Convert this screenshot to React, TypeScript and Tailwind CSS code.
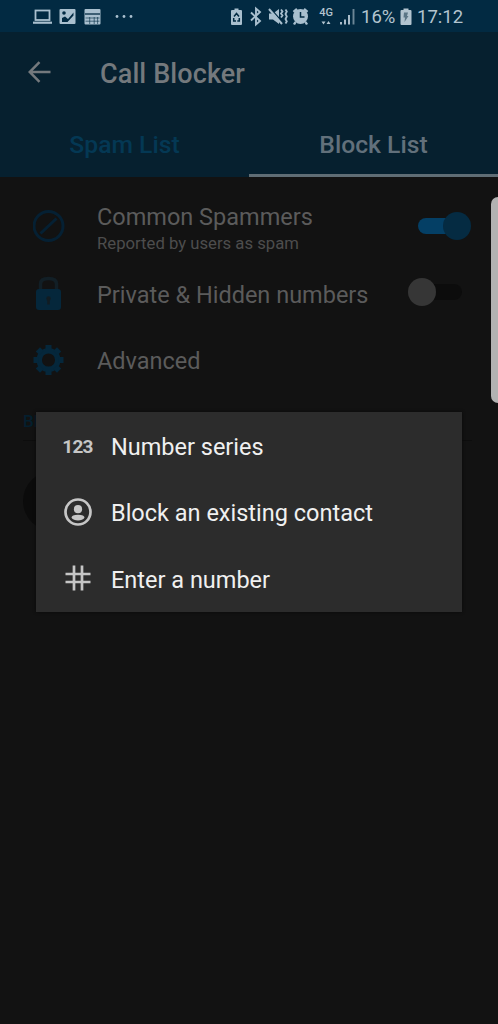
import type { ReactNode } from "react"

function StatusIcons() {
  return (
    <svg className="block w-[110px] h-8 text-[#a9bfce]" viewBox="0 0 110 32" fill="none" stroke="currentColor">
      {/* Laptop */}
      <rect x="4.500" y="10.500" width="14" height="9.500" strokeWidth="1.800" />
      <path d="M2 22.700h19" strokeWidth="2.200" />
      {/* Picture */}
      <rect x="28.500" y="9" width="16" height="15" rx="1" fill="currentColor" stroke="none" />
      <path d="M31 22v-4l3-1.500 3 2.500 5.500-6.500v3l-6 6.500z" fill="#022a42" stroke="none" />
      <circle cx="33" cy="13" r="1.800" fill="#022a42" stroke="none" />
      {/* Calendar */}
      <rect x="53.500" y="9" width="16" height="15.500" rx="1" fill="currentColor" stroke="none" />
      <path d="M54 14h15" stroke="#022a42" strokeWidth="1.300" />
      <path d="M54.500 18h14M54.500 21.200h14" stroke="#022a42" strokeWidth=".6" />
      <path d="M58.700 17v7M63.200 17v7M66.600 17v7" stroke="#022a42" strokeWidth=".6" />
      {/* More */}
      <g fill="currentColor" stroke="none">
        <circle cx="86" cy="16.500" r="1.400" />
        <circle cx="93" cy="16.500" r="1.400" />
        <circle cx="100" cy="16.500" r="1.400" />
      </g>
    </svg>
  )
}

function SystemIcons() {
  return (
    <svg className="block w-[88px] h-8 text-[#a9bfce]" viewBox="0 0 88 32" fill="none" stroke="currentColor">
      {/* Battery saver */}
      <path d="M1 11q0-1 1-1h2.500V8.500h4V10H11q1 0 1 1v13q0 1-1 1H2q-1 0-1-1z" fill="currentColor" stroke="none" />
      <path d="M4 16.500L6.500 13.500l2.500 3M3.700 18v3H6M9.300 18v3H7.300" stroke="#022a42" strokeWidth="1.500" />
      {/* Bluetooth */}
      <path d="M21 12.500l9 8.500-4 3.500v-16l4 3.500-9 8.500" strokeWidth="1.900" />
      {/* Muted speaker */}
      <path d="M39 13.500h4l6-4.500v15l-6-4.500h-4z" fill="currentColor" stroke="none" />
      <path d="M40.500 8.500l13 15" stroke="#022a42" strokeWidth="1.500" />
      <path d="M39 9l13 15" strokeWidth="2" />
      <path d="M51 9.500l1.500 2-1.500 2 1.500 2-1.500 2M55.500 9.500l1.300 2-1.300 2.500 1.300 2.500-1.300 2.500 1.300 2.500-1.300 2" strokeWidth="1.800" />
      {/* Alarm */}
      <circle cx="70.500" cy="16.500" r="7.500" fill="currentColor" stroke="none" />
      <path d="M63.500 12l3.500-3M77.500 12l-3.500-3M65.500 22l-1.500 2.500M75.500 22l1.500 2.500" strokeWidth="2.400" />
      <path d="M70.500 12v5h4" stroke="#022a42" strokeWidth="1.500" />
    </svg>
  )
}

function Header() {
  return (
    <header className="h-[177px] bg-[#06202f]">
      <div className="flex h-8 bg-[#022a42] pl-[31px] text-[#b3c4cf]">
        <StatusIcons />
        <div className="ml-[89px] flex">
          <SystemIcons />
          <div className="flex w-4 flex-col items-center pt-[7px]">
            <span className="text-[11px] font-medium leading-[11px]">4G</span>
            <svg className="mt-0.5 h-[5px] w-3" viewBox="0 0 12 5" fill="currentColor">
              <path d="M1.500 1.500H5.500L3.500 4.500zM6.500 4h4L8.500 1z" />
            </svg>
          </div>
          <svg className="ml-[5px] h-8 w-[18px]" viewBox="0 0 18 32" stroke="currentColor" strokeWidth="1.900">
            <path d="M2 22v2.500M6 19.500v5M10 15v9.500" />
            <path d="M14.500 9v15.500" opacity=".6" />
          </svg>
          <span className="ml-1 w-[34px] text-[18.500px] leading-[35px]">16%</span>
          <svg className="ml-[5px] h-8 w-3" viewBox="0 0 12 32" fill="currentColor">
            <path d="M.5 11q0-1 1-1h2V8.500h5V10h2q1 0 1 1v13q0 1-1 1h-9q-1 0-1-1z" />
            <path d="M4 12.500h4l-1 3.500h1.500L4.500 22l.5-4.500H3.500z" fill="#5c7686" />
          </svg>
          <span className="ml-[5px] text-[18.500px] leading-[35px]">17:12</span>
        </div>
      </div>
      <div className="flex h-20 items-center pl-7 text-[#74797d]">
        <svg className="h-6 w-6" viewBox="0 0 24 24" fill="none" stroke="currentColor" strokeWidth="2.500">
          <path d="M22.500 12H2M11.500 2.200L1.700 12l9.800 9.800" />
        </svg>
        <h1 className="ml-12 mt-[3px] text-[27px] font-medium leading-8 tracking-[0.1px]">Call Blocker</h1>
      </div>
      <nav className="grid h-[65px] grid-cols-2 text-center text-[24.700px] font-medium leading-[66px]">
        <div className="h-full text-[#043854]">Spam List</div>
        <div className="h-[65px] border-b-3 border-[#5f6d75] text-[#62707b]">Block List</div>
      </nav>
    </header>
  )
}

function MenuItem({ icon, label }: { icon: ReactNode; label: string }) {
  return (
    <div className="flex h-[66.500px] items-center">
      <div className="flex w-[83px] justify-center">{icon}</div>
      <span className="-ml-2 mt-px text-[23.500px] leading-7 text-[#f0f0f0]">{label}</span>
    </div>
  )
}

export default function App() {
  return (
    <div className="relative h-[1024px] w-[498px] overflow-hidden bg-[#121212] font-[Roboto,sans-serif]">
      <Header />

      <main className="pl-[33px] pt-[15px] text-[23.500px] leading-7 text-[#5b5b5b]">
        <div className="flex h-[68px] items-center">
          <svg className="h-8 w-8 text-[#052033]" viewBox="0 0 32 32" fill="none" stroke="currentColor" strokeWidth="3">
            <circle cx="15.500" cy="16" r="14.500" />
            <path d="M7.500 23.500L23.500 8.500" />
          </svg>
          <div className="ml-8 w-[321px] pt-[7px]">
            <div>Common Spammers</div>
            <div className="text-[16.700px] leading-[26px] text-[#4d4d4d]">Reported by users as spam</div>
          </div>
          <div className="relative h-7 w-[53px]">
            <div className="mt-1.5 h-4 w-11 rounded-full bg-[#043f65]" />
            <div className="absolute right-0 top-0 h-7 w-7 rounded-full bg-[#052b42]" />
          </div>
        </div>

        <div className="flex h-[67px] items-center">
          <svg className="-mt-0.5 h-[34px] w-8" viewBox="0 0 32 34" fill="none">
            <path d="M7.500 14V8q0-5.500 8-5.500t8 5.500v6" stroke="#121f26" strokeWidth="3.500" />
            <rect x="3" y="13" width="25" height="21" rx="3" fill="#05273b" />
            <circle cx="15.500" cy="22.500" r="2.200" fill="#121c22" />
            <path d="M15.500 22v6.500" stroke="#121c22" strokeWidth="2.500" />
          </svg>
          <div className="ml-8 mt-0.5 w-[311px]">Private &amp; Hidden numbers</div>
          <div className="relative -mt-1 h-7 w-[54px]">
            <div className="ml-2.5 mt-1.5 h-4 w-11 rounded-full bg-[#0c0c0c]" />
            <div className="absolute left-0 top-0 h-7 w-7 rounded-full bg-[#363636]" />
          </div>
        </div>

        <div className="flex h-[67px] items-center">
          <svg className="-mt-0.5 h-8 w-8 text-[#05273b]" viewBox="0 0 32 32" fill="none" stroke="currentColor">
            <circle cx="15.500" cy="16" r="9.300" strokeWidth="5.500" />
            {/* Eight teeth, one of them straight up */}
            <path
              d="M15.500 1v5M15.500 26v5M.5 16h5M25.500 16h5M4.900 5.400l3.500 3.500M22.600 23.100l3.500 3.500M4.900 26.600l3.500-3.500M22.600 8.900l3.500-3.500"
              strokeWidth="6"
            />
          </svg>
          <div className="ml-8 mt-px">Advanced</div>
        </div>
      </main>

      {/* List behind the dialog */}
      <section className="pl-[23px] pr-[26px] pt-[17px]">
        <div className="h-[30px] border-b border-[#0d0d0d] text-[17px] font-medium leading-[20px] text-[#041f2e]">
          Blocked
        </div>
        <div className="mt-[30px] h-[60px] w-[60px] rounded-full bg-[#0b0b0b]" />
      </section>

      {/* Edge panel handle */}
      <div className="absolute -right-2 top-[197px] h-[206px] w-[15px] rounded-[7px] bg-[#b2b2b2]" />

      <div className="absolute left-9 top-[412px] h-[200px] w-[426px] bg-[#2c2c2c] pt-px shadow-[0_0_3px_#0a0a0a]">
        <MenuItem
          label="Number series"
          icon={<span className="mt-0.5 text-[19px] font-bold leading-6 tracking-[-0.8px] text-[#c6c6c6]">123</span>}
        />
        <MenuItem
          label="Block an existing contact"
          icon={
            <svg className="-mt-0.5 h-7 w-7 text-[#c6c6c6]" viewBox="0 0 28 28">
              <circle cx="14" cy="14" r="12.500" fill="none" stroke="currentColor" strokeWidth="2.700" />
              <circle cx="14" cy="11.200" r="4.100" fill="currentColor" />
              <path d="M7.500 19.800q0-3 6.500-3t6.500 3q-2 2.700-6.500 2.700t-6.500-2.700z" fill="currentColor" />
            </svg>
          }
        />
        <MenuItem
          label="Enter a number"
          icon={
            <svg className="-mt-0.5 h-7 w-7 text-[#c6c6c6]" viewBox="0 0 28 28" stroke="currentColor" strokeWidth="2.700">
              <path d="M10 1.500v25M18 1.500v25M1.500 10h25M1.500 18h25" />
            </svg>
          }
        />
      </div>
    </div>
  )
}
